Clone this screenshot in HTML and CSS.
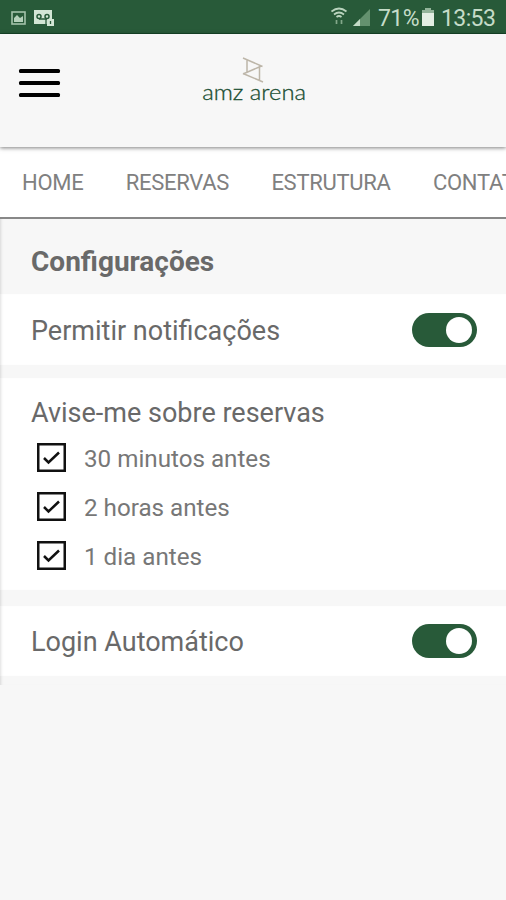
FILE: index.html
```html
<!DOCTYPE html>
<html lang="pt-BR">
<head>
<meta charset="utf-8">
<meta name="viewport" content="width=device-width, initial-scale=1">
<title>amz arena</title>
<link rel="stylesheet" href="styles.css">
</head>
<body>
<div class="status">
  <svg class="status-left" width="48" height="34" viewBox="0 0 48 34">
    <rect x="2" y="12" width="13" height="12" fill="none" stroke="#a3c2aa" stroke-width="1.6"/>
    <path d="M4 22v-4l3-3 3 3 3-2v6z" fill="#b4d0ba"/>
    <path d="M24 10h18v9h2v7h-7v-2H24z" fill="#d3e6d5"/>
    <circle cx="29" cy="16.500" r="2" fill="none" stroke="#285a39" stroke-width="1.500"/>
    <circle cx="37" cy="16.500" r="2" fill="none" stroke="#285a39" stroke-width="1.500"/>
    <path d="M29 19h8M36 19v5M40.500 21v3" fill="none" stroke="#285a39" stroke-width="1.300"/>
  </svg>
  <div class="status-right">
    <svg width="44" height="34" viewBox="0 0 44 34">
      <g fill="none" stroke="#b9d3bd" stroke-width="1.700">
        <path d="M.5 11.500Q8 5.500 15.500 11.500M3 14.500Q8 10.500 13 14.500M5.500 17Q8 15 10.500 17"/>
        <path d="M5.500 20v4M10.500 20v4" stroke="#83a88b"/>
      </g>
      <path d="M39 9v17H22z" fill="#64916f"/>
      <path d="M29 19v7h-7z" fill="#c4dbc7"/>
    </svg>
    <span class="percent">71%</span>
    <svg class="battery" width="12" height="34" viewBox="0 0 12 34"><path d="M0 10h3V8h6v2h3v16H0z" fill="#e3eee3"/><path d="M0 10h3V8h6v2h3v3H0z" fill="#93b49a"/></svg>
    <span class="clock">13:53</span>
  </div>
</div>
<header class="header">
  <button class="menu" aria-label="Menu"><i></i><i></i><i></i></button>
  <div class="brand">
    <svg width="22" height="26" viewBox="0 0 22 26" fill="none" stroke="#bdb6a9" stroke-width="1.500"><path d="M1 1L20.500 9.500M5 3v12M1 17L19.500 9M17.500 9v14M1 16.500L21 25"/></svg>
    <span class="wordmark">amz arena</span>
  </div>
</header>
<nav class="tabs"><a>HOME</a><a>RESERVAS</a><a>ESTRUTURA</a><a>CONTATO</a></nav>
<main class="settings">
  <h1>Configurações</h1>
  <section class="row"><span class="label">Permitir notificações</span><span class="toggle"></span></section>
  <section class="reminders">
    <h2>Avise-me sobre reservas</h2>
    <div class="option"><svg class="box" viewBox="0 0 29 29"><path d="M1.250 1.250h26.500v26.500h-26.500zM7 15l4.500 4.500L22 9.500"/></svg><span>30 minutos antes</span></div>
    <div class="option"><svg class="box" viewBox="0 0 29 29"><path d="M1.250 1.250h26.500v26.500h-26.500zM7 15l4.500 4.500L22 9.500"/></svg><span>2 horas antes</span></div>
    <div class="option"><svg class="box" viewBox="0 0 29 29"><path d="M1.250 1.250h26.500v26.500h-26.500zM7 15l4.500 4.500L22 9.500"/></svg><span>1 dia antes</span></div>
  </section>
  <section class="row login"><span class="label">Login Automático</span><span class="toggle"></span></section>
</main>
</body>
</html>
```
FILE: styles.css
```css
* { box-sizing: border-box; }
body { margin: 0; height: 900px; overflow: hidden; background: #f7f7f7; color: #696969; font-family: Roboto, sans-serif; }
svg { display: block; flex: none; }
.status { height: 34px; padding: 0 11px 0 10px; display: flex; justify-content: space-between; background: #285a39; border-bottom: 1px solid #17472a; color: #c5dcc8; }
.status-right { display: flex; font-size: 23px; line-height: 37px; }
.percent { margin-left: 3px; width: 42px; white-space: nowrap; letter-spacing: -.6px; }
.battery { margin-left: 2px; }
.clock { width: 54px; margin-left: 7px; letter-spacing: -.6px; white-space: nowrap; }
.header { position: relative; height: 113px; padding: 0 19px; display: grid; grid-template-columns: 41px 1fr 41px; background: #f7f7f7; box-shadow: 0 1px 4px rgba(0,0,0,.5); z-index: 1; }
.menu { border: 0; background: none; padding: 35px 0 0; display: flex; flex-direction: column; gap: 8px; }
.menu i { display: block; width: 41px; height: 4px; background: #000; border-radius: 1.500px; }
.brand { display: flex; flex-direction: column; align-items: center; padding-top: 23px; }
.wordmark { margin-top: -6px; font: 300 22px/30px Lato, sans-serif; color: #174d31; -webkit-text-stroke: .3px #174d31; white-space: nowrap; transform: translateX(1px) scaleX(1.08); }
.tabs { height: 72px; padding: 1px 0 0 22px; display: flex; gap: 42.300px; align-items: center; border-bottom: 2px solid #888; background: #fff; color: #808080; font-size: 22px; letter-spacing: -.28px; white-space: nowrap; overflow: hidden; }
.settings { height: 466px; box-shadow: inset 3px 0 3px -2px rgba(0,0,0,.13); }
h1 { margin: 0; height: 75px; padding: 0 31px; font-size: 28px; line-height: 86px; font-weight: 700; }
.row { height: 71px; padding: 0 29px 0 31px; display: flex; justify-content: space-between; align-items: center; font-size: 27px; background: #fff; box-shadow: inset 3px 0 3px -2px rgba(0,0,0,.13); }
.label { padding-top: 2px; }
.toggle { width: 65px; height: 34px; padding: 4px 5px; display: flex; justify-content: flex-end; border-radius: 17px; background: #285a39; }
.toggle::after { content: ""; width: 26px; height: 26px; border-radius: 50%; background: #fff; }
.reminders { height: 212px; margin: 13px 0 16px; padding: 18px 31px 0; background: #fff; box-shadow: inset 3px 0 3px -2px rgba(0,0,0,.13); }
h2 { margin: 0; height: 37px; font-size: 27px; line-height: 34px; font-weight: 400; }
.option { height: 49.200px; padding-left: 6px; display: flex; align-items: center; gap: 18px; font-size: 24.200px; color: #777; }
.option span { padding-top: 3px; }
.box { width: 29px; height: 29px; fill: none; stroke: #111; stroke-width: 2.500; }
.login { height: 70px; }
```
